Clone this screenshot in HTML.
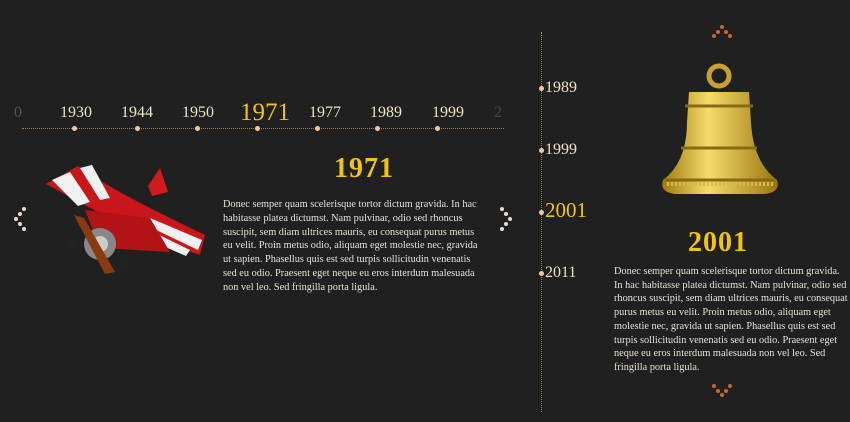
<!DOCTYPE html>
<html><head><style>
body{margin:0;width:850px;height:422px;background:#202020;overflow:hidden;position:relative;font-family:"Liberation Serif","DejaVu Serif",serif}
.a{position:absolute}
.y{color:#eee3c4;font-size:16px}
.p{color:#e8e2d6;font-size:10.3px;line-height:13.7px}
.t{color:#f2c40f;font-weight:bold;font-size:28px;letter-spacing:1px}
.d{position:absolute;width:5px;height:5px;border-radius:50%;background:#f2c8a0}
.o{position:absolute;width:4px;height:4px;border-radius:50%;background:#c66a2a}
.w{position:absolute;width:4px;height:4px;border-radius:50%;background:#eadcc8}
</style></head><body>
<div class="a" style="left:22px;top:128px;width:482px;border-top:1px dotted #a08060"></div>
<div class="a y" style="left:14px;top:104px;color:#555">0</div>
<div class="a y" style="left:60px;top:104px">1930</div>
<div class="a y" style="left:121px;top:104px">1944</div>
<div class="a y" style="left:182px;top:104px">1950</div>
<div class="a" style="left:240px;top:99px;color:#f2c40f;font-size:25px">1971</div>
<div class="a y" style="left:309px;top:104px">1977</div>
<div class="a y" style="left:370px;top:104px">1989</div>
<div class="a y" style="left:432px;top:104px">1999</div>
<div class="a y" style="left:494px;top:104px;color:#444">2</div>
<div class="d" style="left:72px;top:126px"></div><div class="d" style="left:135px;top:126px"></div><div class="d" style="left:195px;top:126px"></div><div class="d" style="left:255px;top:126px"></div><div class="d" style="left:315px;top:126px"></div><div class="d" style="left:375px;top:126px"></div><div class="d" style="left:435px;top:126px"></div>
<div class="w" style="left:22px;top:207px"></div><div class="w" style="left:18px;top:212px"></div><div class="w" style="left:14px;top:217px"></div><div class="w" style="left:18px;top:222px"></div><div class="w" style="left:22px;top:227px"></div>
<div class="w" style="left:500px;top:207px"></div><div class="w" style="left:504px;top:212px"></div><div class="w" style="left:508px;top:217px"></div><div class="w" style="left:504px;top:222px"></div><div class="w" style="left:500px;top:227px"></div>
<svg class="a" style="left:40px;top:160px" width="170" height="120" viewBox="0 0 170 120">
<path d="M6 24 L38 6 Q70 30 165 75 L160 95 L95 72 Z" fill="#c8161a"/>
<path d="M12 20 L30 12 L50 42 L38 46 Z M40 8 L52 5 L70 38 L60 40 Z M110 58 L162 80 L158 90 L112 68 Z M105 68 L150 90 L146 96 L100 76 Z" fill="#f0f0f0"/>
<path d="M45 50 L110 58 L130 92 L60 88 Z" fill="#b31216"/>
<path d="M108 26 L120 8 L128 32 L112 36 Z" fill="#d01a1e"/>
<circle cx="60" cy="84" r="16" fill="#888"/><circle cx="60" cy="84" r="8" fill="#ccc"/>
<path d="M34 55 L44 58 L75 112 L65 114 Z" fill="#8a3a10"/>
<circle cx="85" cy="104" r="5" fill="#222"/><circle cx="32" cy="84" r="4" fill="#222"/>
</svg>
<div class="a t" style="left:334px;top:153px">1971</div>
<div class="a p" style="left:223px;top:198px;width:258px;line-height:13.8px">Donec semper quam scelerisque tortor dictum gravida. In hac habitasse platea dictumst. Nam pulvinar, odio sed rhoncus suscipit, sem diam ultrices mauris, eu consequat purus metus eu velit. Proin metus odio, aliquam eget molestie nec, gravida ut sapien. Phasellus quis est sed turpis sollicitudin venenatis sed eu odio. Praesent eget neque eu eros interdum malesuada non vel leo. Sed fringilla porta ligula.</div>
<div class="a" style="left:541px;top:32px;height:380px;border-left:1px dotted #a08060"></div>
<div class="d" style="left:539px;top:86px"></div><div class="d" style="left:539px;top:148px"></div><div class="d" style="left:539px;top:210px"></div><div class="d" style="left:539px;top:271px"></div>
<div class="a y" style="left:545px;top:79px">1989</div>
<div class="a y" style="left:545px;top:141px">1999</div>
<div class="a" style="left:545px;top:198px;color:#f2c40f;font-size:21px">2001</div>
<div class="a y" style="left:545px;top:264px">2011</div>
<div class="o" style="left:720px;top:25px"></div><div class="o" style="left:716px;top:30px"></div><div class="o" style="left:724px;top:30px"></div><div class="o" style="left:712px;top:34px"></div><div class="o" style="left:728px;top:34px"></div>
<div class="o" style="left:712px;top:384px"></div><div class="o" style="left:728px;top:384px"></div><div class="o" style="left:716px;top:389px"></div><div class="o" style="left:724px;top:389px"></div><div class="o" style="left:720px;top:393px"></div>
<svg class="a" style="left:655px;top:62px" width="130" height="140" viewBox="0 0 130 140">
<defs><linearGradient id="g" x1="0" x2="1"><stop offset="0" stop-color="#a07a10"/><stop offset=".4" stop-color="#f5dc6a"/><stop offset="1" stop-color="#9a7410"/></linearGradient></defs>
<circle cx="64" cy="14" r="10" fill="none" stroke="#c9a030" stroke-width="5"/>
<path d="M34 30 L94 30 L96 60 Q98 100 122 118 Q126 130 110 132 L20 132 Q4 130 8 118 Q32 100 32 60 Z" fill="url(#g)"/>
<path d="M30 44 H98 M26 86 H102 M10 118 H120" stroke="#8a6a10" stroke-width="3"/>
<path d="M12 122 H118" stroke="#d8b850" stroke-width="4" stroke-dasharray="2 2"/>
</svg>
<div class="a t" style="left:688px;top:227px">2001</div>
<div class="a p" style="left:614px;top:265px;width:234px">Donec semper quam scelerisque tortor dictum gravida. In hac habitasse platea dictumst. Nam pulvinar, odio sed rhoncus suscipit, sem diam ultrices mauris, eu consequat purus metus eu velit. Proin metus odio, aliquam eget molestie nec, gravida ut sapien. Phasellus quis est sed turpis sollicitudin venenatis sed eu odio. Praesent eget neque eu eros interdum malesuada non vel leo. Sed fringilla porta ligula.</div>
</body></html>
